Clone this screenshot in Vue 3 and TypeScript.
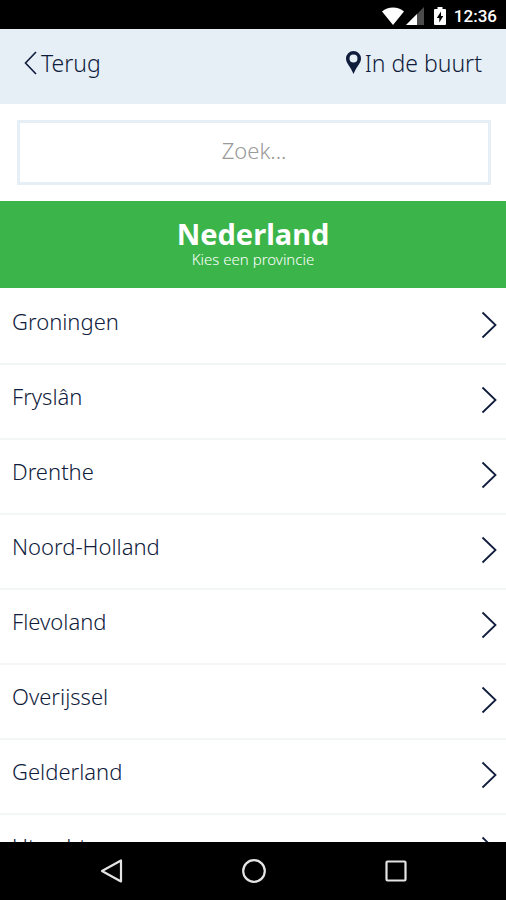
<script setup lang="ts">
import { ref } from 'vue'

const query = ref<string>('')

const provinces: string[] = [
  'Groningen',
  'Fryslân',
  'Drenthe',
  'Noord-Holland',
  'Flevoland',
  'Overijssel',
  'Gelderland',
  'Utrecht',
]
</script>

<template>
  <div class="screen">
    <div class="status">
      <svg class="wifi" viewBox="0 0 22 18" aria-hidden="true">
        <path d="M11 18 0 4.500C3 1.800 6.800 0.500 11 0.500S19 1.800 22 4.500Z" fill="#fff" />
      </svg>
      <svg class="signal" viewBox="0 0 18 18" aria-hidden="true">
        <path d="M18 0V18H0Z" fill="#4c4c4c" />
        <path d="M11 7V18H0Z" fill="#fff" />
      </svg>
      <svg class="battery" viewBox="0 0 12 18" aria-hidden="true">
        <path d="M3.500 0h5v2H11q1 0 1 1v14q0 1-1 1H1q-1 0-1-1V3q0-1 1-1h2.500Z" fill="#fff" />
        <path d="M7 4.500 2.800 11H5.300V15.500L9.300 9H7Z" fill="#000" />
      </svg>
      <span class="clock">12:36</span>
    </div>

    <header class="topbar">
      <button type="button" class="action">
        <svg class="back" viewBox="0 0 13 24" aria-hidden="true">
          <path d="M12 1 1.500 12 12 23" fill="none" stroke="currentColor" stroke-width="1.600" />
        </svg>
        <span>Terug</span>
      </button>
      <button type="button" class="action">
        <svg class="pin" viewBox="0 0 15 23" aria-hidden="true">
          <path
            d="M7.500 0A7.500 7.500 0 0 0 0 7.500C0 12.500 4.500 15.500 7.500 23 10.500 15.500 15 12.500 15 7.500A7.500 7.500 0 0 0 7.500 0ZM7.500 3.500A4 4 0 1 1 7.500 11.500 4 4 0 0 1 7.500 3.500Z"
            fill="currentColor"
            fill-rule="evenodd"
          />
        </svg>
        <span>In de buurt</span>
      </button>
    </header>

    <main class="content">
      <form class="search" @submit.prevent>
        <input v-model="query" type="text" placeholder="Zoek..." aria-label="Zoek" />
      </form>

      <section class="banner">
        <h1>Nederland</h1>
        <p>Kies een provincie</p>
      </section>

      <ul class="list">
        <li v-for="name in provinces" :key="name">
          <a href="#" class="row">
            <span>{{ name }}</span>
            <svg class="chevron" viewBox="0 0 16 28" aria-hidden="true">
              <path d="M1.500 1.500 14.500 14 1.500 26.500" fill="none" stroke="currentColor" stroke-width="1.800" />
            </svg>
          </a>
        </li>
      </ul>
    </main>

    <nav class="navbar">
      <button type="button" aria-label="Vorige">
        <svg viewBox="0 0 26 26" aria-hidden="true">
          <path d="M22 2.500V23.500L3 13Z" />
        </svg>
      </button>
      <button type="button" aria-label="Start">
        <svg viewBox="0 0 26 26" aria-hidden="true">
          <circle cx="13" cy="13" r="10.800" />
        </svg>
      </button>
      <button type="button" aria-label="Overzicht">
        <svg viewBox="0 0 26 26" aria-hidden="true">
          <rect x="3.500" y="3.500" width="19" height="19" rx="1" />
        </svg>
      </button>
    </nav>
  </div>
</template>

<style>
body {
  margin: 0;
  background: #fff;
}
</style>

<style scoped>
.screen {
  display: flex;
  flex-direction: column;
  height: 100vh;
  overflow: hidden;
  background: #fff;
  color: #101c3c;
  font-family: 'Noto Sans', 'Open Sans', sans-serif;
  font-weight: 300;
}

button {
  margin: 0;
  padding: 0;
  border: 0;
  background: none;
  color: inherit;
  font: inherit;
}

.status {
  display: flex;
  flex: none;
  align-items: center;
  justify-content: flex-end;
  height: 29px;
  padding: 2px 9px 0 0;
  box-sizing: border-box;
  background: #000;
  color: #fff;
}

.wifi {
  width: 22px;
  height: 18px;
  margin-right: 2px;
}

.signal {
  width: 18px;
  height: 18px;
  margin-right: 10px;
}

.battery {
  width: 12px;
  height: 18px;
  margin-right: 8px;
}

.clock {
  font-family: Roboto, sans-serif;
  font-size: 17px;
  font-weight: 500;
  line-height: 20px;
}

.topbar {
  display: flex;
  flex: none;
  align-items: center;
  justify-content: space-between;
  height: 75px;
  padding: 0 24px 8px;
  box-sizing: border-box;
  background: #e6eff6;
}

.action {
  display: flex;
  align-items: center;
  gap: 4px;
  font-size: 23px;
  line-height: 30px;
}

.back {
  width: 13px;
  height: 24px;
}

.pin {
  width: 15px;
  height: 23px;
}

.content {
  flex: 1;
  min-height: 0;
  overflow: hidden;
}

.search {
  padding: 16px 15px 16px 17px;
}

.search input {
  display: block;
  width: 100%;
  height: 65px;
  padding: 0 0 6px;
  box-sizing: border-box;
  border: 3px solid #e6eff6;
  border-radius: 0;
  outline: 0;
  background: #fff;
  color: inherit;
  font: inherit;
  font-size: 22px;
  text-align: center;
}

.search input::placeholder {
  color: #999;
  opacity: 1;
}

.banner {
  height: 87px;
  padding-top: 16px;
  box-sizing: border-box;
  background: #3bb54a;
  color: #fff;
  text-align: center;
}

.banner h1 {
  margin: 0;
  font-size: 29px;
  font-weight: 700;
  line-height: 34px;
}

.banner p {
  margin: 0;
  font-size: 15px;
  line-height: 16px;
}

.list {
  margin: 0;
  padding: 0;
  list-style: none;
}

.row {
  display: flex;
  align-items: center;
  justify-content: space-between;
  height: 75px;
  padding: 0 9px 2px 12px;
  box-sizing: border-box;
  color: inherit;
  font-size: 22px;
  line-height: 30px;
  text-decoration: none;
}

li + li .row {
  box-shadow: inset 0 2px #f3f6f7;
}

.row span {
  padding-bottom: 8px;
}

.chevron {
  width: 16px;
  height: 28px;
}

.navbar {
  display: flex;
  flex: none;
  align-items: center;
  justify-content: center;
  gap: 116px;
  height: 58px;
  padding-left: 2px;
  background: #000;
}

.navbar svg {
  display: block;
  width: 26px;
  height: 26px;
  fill: none;
  stroke: #e4e4e4;
  stroke-width: 2.2;
  stroke-linejoin: round;
}
</style>
